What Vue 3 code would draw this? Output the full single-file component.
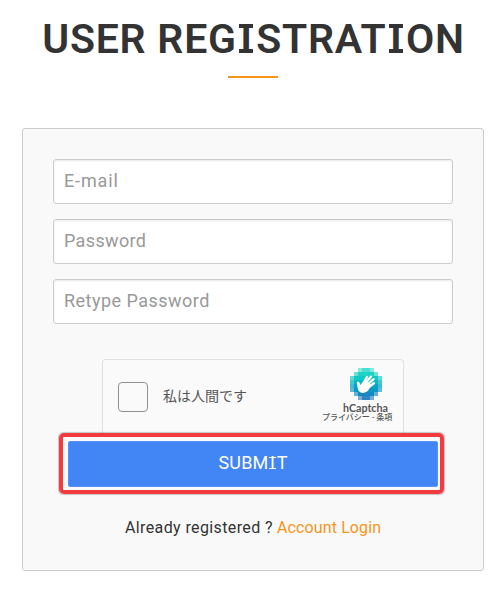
<script setup>
import { ref } from 'vue'

const fields = ref([
  { label: 'E-mail', type: 'email', cls: 'email', value: '' },
  { label: 'Password', type: 'password', cls: 'password', value: '' },
  { label: 'Retype Password', type: 'password', cls: 'retype', value: '' },
])
const human = ref(false)

// Pixel mosaic behind the captcha hand: first column, last column, colour
const mosaic = []
const rows = [
  [2, 5, '#45e0d0'],
  [1, 6, '#20d2c6'],
  [0, 7, '#10c8c4'],
  [0, 7, '#08b8c2'],
  [0, 7, '#05a6c3'],
  [0, 7, '#0d97c5'],
  [1, 6, '#1588c4'],
  [2, 5, '#3183c4'],
]
rows.forEach(([from, to, color], row) => {
  for (let col = from; col <= to; col++) {
    const outer = col === 0 || col === 7
    const corner = (row === 0 || row === 7) && (col === 2 || col === 5)
    const diagonal = (row === 1 || row === 6) && (col === 1 || col === 6)
    const opacity = (outer && (row === 2 || row === 5)) || corner || diagonal ? 0.65 : outer ? 0.75 : 1
    mosaic.push({ x: col * 4, y: row * 4, color, opacity })
  }
})
</script>

<template>
  <main class="page">
    <h1 class="title">USER REG<span class="slab">I</span>STRAT<span class="slab">I</span>ON</h1>
    <div class="rule"></div>
    <form class="card" @submit.prevent>
      <input
        v-for="f in fields"
        :key="f.label"
        v-model="f.value"
        :class="['field', f.cls]"
        :type="f.type"
        :placeholder="f.label"
      />
      <div class="captcha">
        <button
          type="button"
          class="check"
          role="checkbox"
          :aria-checked="human"
          @click="human = !human"
        ></button>
        <span class="human">私は人間です</span>
        <div class="brand">
          <svg class="logo" viewBox="0 0 32 32" width="32" height="32">
            <rect
              v-for="(p, i) in mosaic"
              :key="i"
              :x="p.x"
              :y="p.y"
              width="4"
              height="4"
              :fill="p.color"
              :fill-opacity="p.opacity"
              shape-rendering="crispEdges"
            />
            <path
              d="M12 17 L17 9 M14 17 L21 8.6 M16 18 L23.6 11.2 M17.5 20 L24 15.2"
              fill="none"
              stroke="#fff"
              stroke-width="2.3"
              stroke-linecap="round"
            />
            <path
              d="M7.6 13.6 C9 13.4 9.8 15 10.4 17 L12.5 14.8 L16.5 13.2 L20.5 16.6 C19.8 18.4 20 21.4 17 23.6 C14.2 25.6 10.6 25.4 8.8 23 C7.2 20.6 7.8 18.6 7 15.4 C6.7 14.6 6.9 13.8 7.6 13.6 Z"
              fill="#fff"
            />
          </svg>
          <div class="name">hCaptcha</div>
          <div class="legal">プライバシー - 条項</div>
        </div>
      </div>
      <div class="highlight">
        <button type="submit" class="submit">SUBM<span class="slab small">I</span>T</button>
      </div>
      <p class="login"><span class="ask">Already registered ?</span><a>Account Login</a></p>
    </form>
  </main>
</template>

<style>
body {
  margin: 0;
  background: #fff;
}
</style>

<style scoped>
.page {
  box-sizing: border-box;
  width: 503px;
  height: 591px;
  overflow: hidden;
  padding: 14px 19px 0 22px;
  font-family: Roboto, 'Noto Sans CJK JP', sans-serif;
  color: #333;
}
.title {
  margin: 0;
  height: 62px;
  padding-left: 1px;
  line-height: 50px;
  font-size: 41px;
  font-weight: 600;
  letter-spacing: 0.75px;
  white-space: nowrap;
  text-align: center;
}
.slab {
  display: inline-block;
  line-height: 1;
  padding: 0 3.5px;
  background:
    linear-gradient(currentColor, currentColor) 50% 5px / 14px 4px no-repeat,
    linear-gradient(currentColor, currentColor) 50% 30px / 14px 4px no-repeat;
}
.slab.small {
  padding: 0 1.5px;
  background:
    linear-gradient(currentColor, currentColor) 50% 3px / 7px 1px no-repeat,
    linear-gradient(currentColor, currentColor) 50% 14px / 7px 1px no-repeat;
}
.rule {
  width: 50px;
  height: 2px;
  margin: 0 auto 50px 206px;
  background: #f7941d;
}
.card {
  box-sizing: border-box;
  width: 462px;
  height: 443px;
  padding: 30px;
  border: 1px solid #ccc;
  border-radius: 3px;
  background: #f9f9f9;
}
.field {
  display: block;
  box-sizing: border-box;
  width: 400px;
  height: 45px;
  margin: 0 0 15px;
  padding: 0 10px 2px;
  border: 1px solid #ccc;
  border-radius: 3px;
  background: #fff;
  box-shadow: inset 0 1px 2px rgba(0, 0, 0, 0.09);
  font: 400 18px Roboto, sans-serif;
  letter-spacing: 0.35px;
  outline: none;
}
.field.email {
  letter-spacing: 0.85px;
}
.field.retype {
  letter-spacing: 0.48px;
}
.field::placeholder {
  color: #999;
  opacity: 1;
}
.captcha {
  box-sizing: border-box;
  display: flex;
  width: 302px;
  height: 74px;
  margin: 35px 0 0 49px;
  padding-left: 15px;
  border: 1px solid #e0e0e0;
  border-bottom: 0;
  border-radius: 4px 4px 0 0;
  background: #fafafa;
}
.check {
  box-sizing: border-box;
  width: 30px;
  height: 30px;
  margin: 22px 15px 0 0;
  padding: 0;
  border: 1px solid #919191;
  border-radius: 4px;
  background: #fafafa;
}
.human {
  margin-top: 25px;
  line-height: 20px;
  font-family: 'Noto Sans CJK JP', sans-serif;
  font-size: 14px;
  color: #555;
  white-space: nowrap;
}
.brand {
  width: 90px;
  margin: 8px 0 0 auto;
  color: #555;
  white-space: nowrap;
}
.logo {
  display: block;
  margin-left: 37px;
}
.name {
  margin: 3px 0 0 30px;
  font: 700 10.7px/10px Lato, sans-serif;
}
.legal {
  margin: -1px 0 0 9px;
  font: 500 8px/9px 'Noto Sans CJK JP', sans-serif;
}
.highlight {
  box-sizing: border-box;
  width: 385px;
  height: 61px;
  margin-left: 6px;
  padding: 4px 3px 3px 5px;
  border: 4px solid #f23b3e;
  border-radius: 5px;
  box-shadow: 0 0 1px 0.5px rgba(80, 80, 80, 0.3);
}
.submit {
  display: block;
  box-sizing: border-box;
  width: 370px;
  height: 46px;
  padding: 0 0 3px;
  border: 1px solid #5794fa;
  border-radius: 2px;
  background: #4285f4;
  color: #fff;
  font: 400 18px Roboto, sans-serif;
  letter-spacing: 0.2px;
}
.login {
  display: flex;
  margin: 24px 0 0 72px;
  line-height: 20px;
  font-size: 16px;
  font-weight: 400;
  white-space: nowrap;
}
.ask {
  width: 152px;
  letter-spacing: 0.38px;
}
.login a {
  color: #f7941d;
  letter-spacing: 0.12px;
}
</style>
